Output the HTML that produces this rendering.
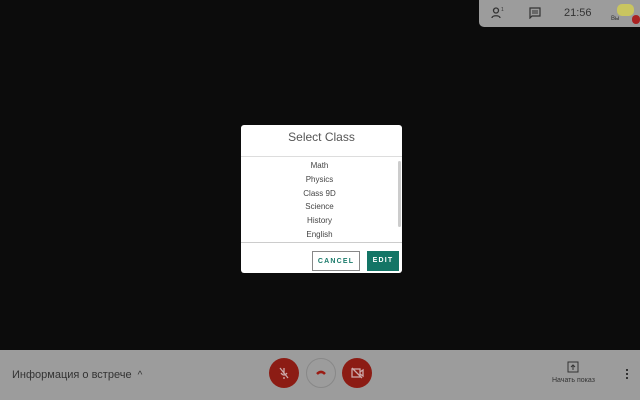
<!DOCTYPE html>
<html><head><meta charset="utf-8"><style>
*{margin:0;padding:0;box-sizing:border-box}
body{width:640px;height:400px;background:#0c0c0c;position:relative;overflow:hidden;font-family:"Liberation Sans",sans-serif}
.top{position:absolute;left:479px;top:0;width:161px;height:27px;background:#9c9c9c;border-bottom-left-radius:5px;color:#333}
.bar{position:absolute;left:0;top:350px;width:640px;height:50px;background:#9c9c9c}
.dlg{position:absolute;left:241px;top:125px;width:161px;height:148px;background:#fff;border-radius:3px}
.title{position:absolute;top:5px;width:100%;text-align:center;font-size:12px;color:#555}
.list{position:absolute;left:0;top:31px;width:161px;height:87px;border-top:1px solid #ddd;border-bottom:1px solid #ccc;padding-top:2px}
.list div{height:13.8px;text-align:center;font-size:8px;color:#444;line-height:13.8px;padding-right:4px}
.btn{position:absolute;top:126px;height:20px;font-size:7px;font-weight:bold;letter-spacing:1.2px;text-align:center;padding-top:2px}
.circ{position:absolute;top:358px;width:30px;height:30px;border-radius:50%}
</style></head><body>
<div class="top">
<svg style="position:absolute;left:12px;top:7px" width="14" height="12" viewBox="0 0 14 12"><circle cx="5" cy="3.5" r="2.5" fill="none" stroke="#333" stroke-width="1.3"/><path d="M1 11c0-3 8-3 8 0" fill="none" stroke="#333" stroke-width="1.3"/><text x="10" y="4" font-size="5" fill="#333">1</text></svg>
<svg style="position:absolute;left:50px;top:7px" width="12" height="12" viewBox="0 0 12 12"><path d="M1 1h10v8H3l-2 2z" fill="none" stroke="#333" stroke-width="1.2"/><path d="M3 4h6M3 6h6" stroke="#333"/></svg>
<div style="position:absolute;left:85px;top:7px;font-size:11px;color:#333">21:56</div>
<div style="position:absolute;left:138px;top:4px;width:17px;height:12px;background:#c9c560;border-radius:5px"></div>
<div style="position:absolute;left:132px;top:16px;font-size:6px">Вы</div>
<div style="position:absolute;left:153px;top:15px;width:8px;height:9px;background:#a22;border-radius:4px"></div>
</div>
<div class="dlg">
<div class="title">Select Class</div>
<div class="list">
<div>Math</div><div>Physics</div><div>Class 9D</div><div>Science</div><div>History</div><div>English</div>
<span style="position:absolute;right:1px;top:4px;width:3px;height:66px;background:#ccc;border-radius:2px"></span>
</div>
<div class="btn" style="left:71px;width:48px;border:1px solid #888;color:#1a7a6a;line-height:15px">CANCEL</div>
<div class="btn" style="left:126px;width:32px;background:#137566;color:#fff;line-height:16px">EDIT</div>
</div>
<div class="bar">
<div style="position:absolute;left:12px;top:19px;font-size:11px;color:#333">Информация о встрече &nbsp;<span style="font-size:10px">^</span></div>
<div style="position:absolute;left:552px;top:27px;font-size:7px;color:#333">Начать показ</div>
<svg style="position:absolute;left:567px;top:11px" width="12" height="12" viewBox="0 0 12 12"><rect x="1" y="1" width="10" height="10" fill="none" stroke="#333"/><path d="M6 9V4M4 6l2-2 2 2" stroke="#333" fill="none"/></svg>
<div style="position:absolute;left:626px;top:19px;width:2px;height:10px;border-top:2px dotted #333;border-bottom:2px dotted #333;background:linear-gradient(#333,#333) center/2px 2px no-repeat"></div>
</div>
<div class="circ" style="left:269px;background:#8c1c14"><svg width="30" height="30" viewBox="0 0 30 30"><path d="M15 10v6M12 15q3 4 6 0M15 19v2M11 10l8 10" stroke="#caa" stroke-width="1.3" fill="none"/></svg></div>
<div class="circ" style="left:306px;border:1px solid #888"><svg width="28" height="28" viewBox="0 0 28 28"><path d="M10 15q4-4 8 0" stroke="#9b1c14" stroke-width="2.5" fill="none"/></svg></div>
<div class="circ" style="left:342px;background:#8c1c14"><svg width="30" height="30" viewBox="0 0 30 30"><rect x="10" y="11" width="8" height="8" fill="none" stroke="#caa" stroke-width="1.3"/><path d="M18 14l3-2v6l-3-2M10 10l10 10" stroke="#caa" stroke-width="1.3" fill="none"/></svg></div>
</body></html>
